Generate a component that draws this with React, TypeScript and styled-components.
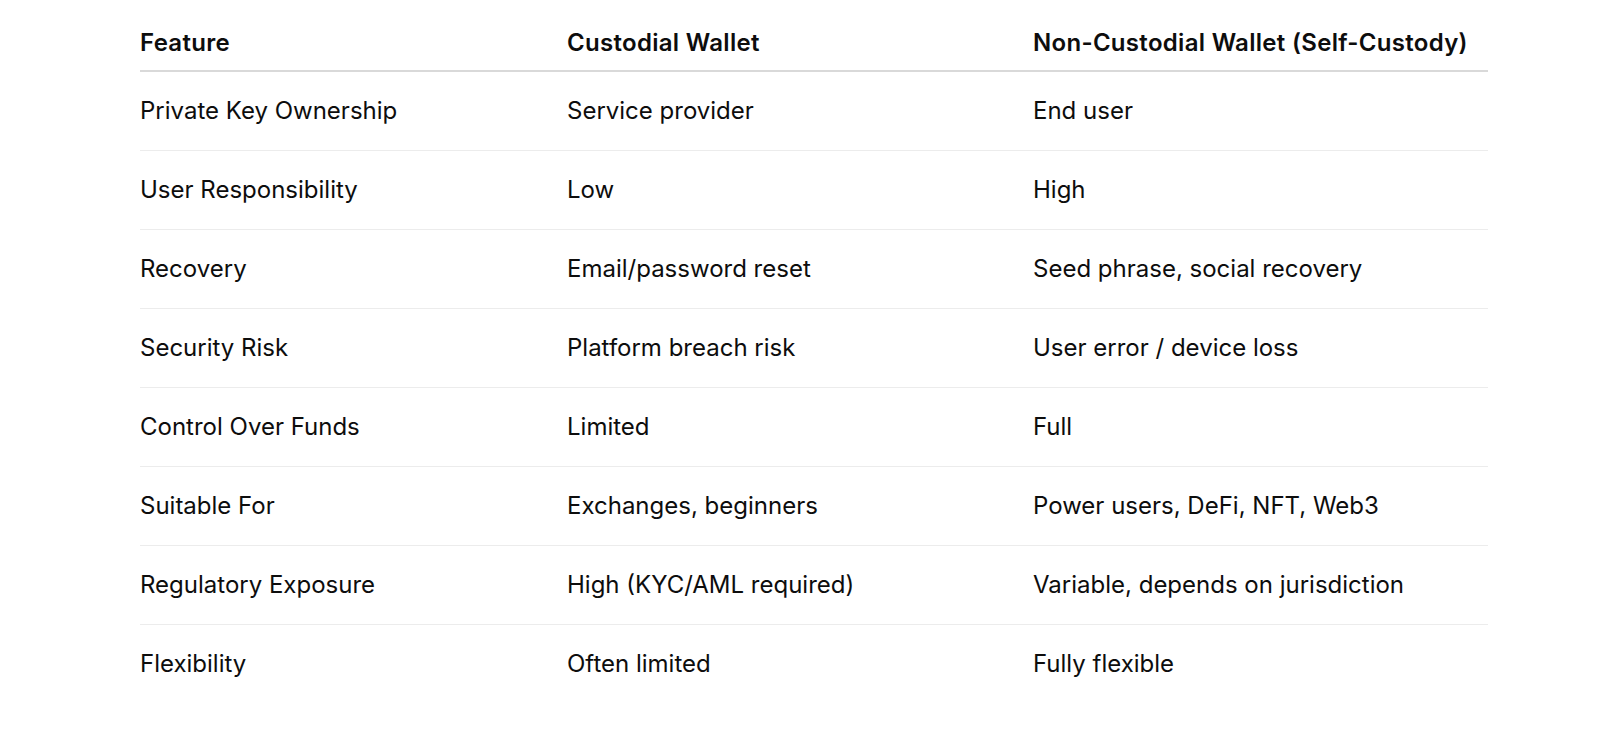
import React from "react";
import styled, { createGlobalStyle } from "styled-components";

const GlobalStyle = createGlobalStyle`
  html, body {
    margin: 0;
    padding: 0;
    background: #ffffff;
  }
  body {
    font-family: Inter, "Noto Sans", "Liberation Sans", sans-serif;
    color: #0d0d0d;
    -webkit-font-smoothing: antialiased;
  }
`;

const Page = styled.div`
  width: 1600px;
  height: 754px;
  box-sizing: border-box;
  padding: 16px 112px 0 140px;
  background: #ffffff;
  overflow: hidden;
`;

const Table = styled.table`
  width: 1348px;
  border-collapse: collapse;
  table-layout: fixed;
`;

const Col = styled.col<{ $w: number }>`
  width: ${(p) => p.$w}px;
`;

const HeadCell = styled.th`
  height: 54px;
  padding: 0;
  text-align: left;
  vertical-align: middle;
  font-size: 24px;
  font-weight: 600;
  line-height: 30px;
  letter-spacing: 0.3px;
  border-bottom: 2px solid #d9d9d9;
  white-space: nowrap;
`;

const Row = styled.tr<{ $last?: boolean }>`
  border-bottom: ${(p) => (p.$last ? "none" : "1px solid #ececec")};
`;

const Cell = styled.td`
  height: 78px;
  padding: 0;
  vertical-align: middle;
  font-size: 24px;
  font-weight: 400;
  line-height: 30px;
  white-space: nowrap;
`;

const rows: [string, string, string][] = [
  ["Private Key Ownership", "Service provider", "End user"],
  ["User Responsibility", "Low", "High"],
  ["Recovery", "Email/password reset", "Seed phrase, social recovery"],
  ["Security Risk", "Platform breach risk", "User error / device loss"],
  ["Control Over Funds", "Limited", "Full"],
  ["Suitable For", "Exchanges, beginners", "Power users, DeFi, NFT, Web3"],
  ["Regulatory Exposure", "High (KYC/AML required)", "Variable, depends on jurisdiction"],
  ["Flexibility", "Often limited", "Fully flexible"],
];

export default function App() {
  return (
    <>
      <GlobalStyle />
      <Page>
        <Table>
          <colgroup>
            <Col $w={427} />
            <Col $w={466} />
            <Col $w={455} />
          </colgroup>
          <thead>
            <tr>
              <HeadCell>Feature</HeadCell>
              <HeadCell>Custodial Wallet</HeadCell>
              <HeadCell>Non-Custodial Wallet (Self-Custody)</HeadCell>
            </tr>
          </thead>
          <tbody>
            {rows.map((r, i) => (
              <Row key={r[0]} $last={i === rows.length - 1}>
                <Cell>{r[0]}</Cell>
                <Cell>{r[1]}</Cell>
                <Cell>{r[2]}</Cell>
              </Row>
            ))}
          </tbody>
        </Table>
      </Page>
    </>
  );
}
